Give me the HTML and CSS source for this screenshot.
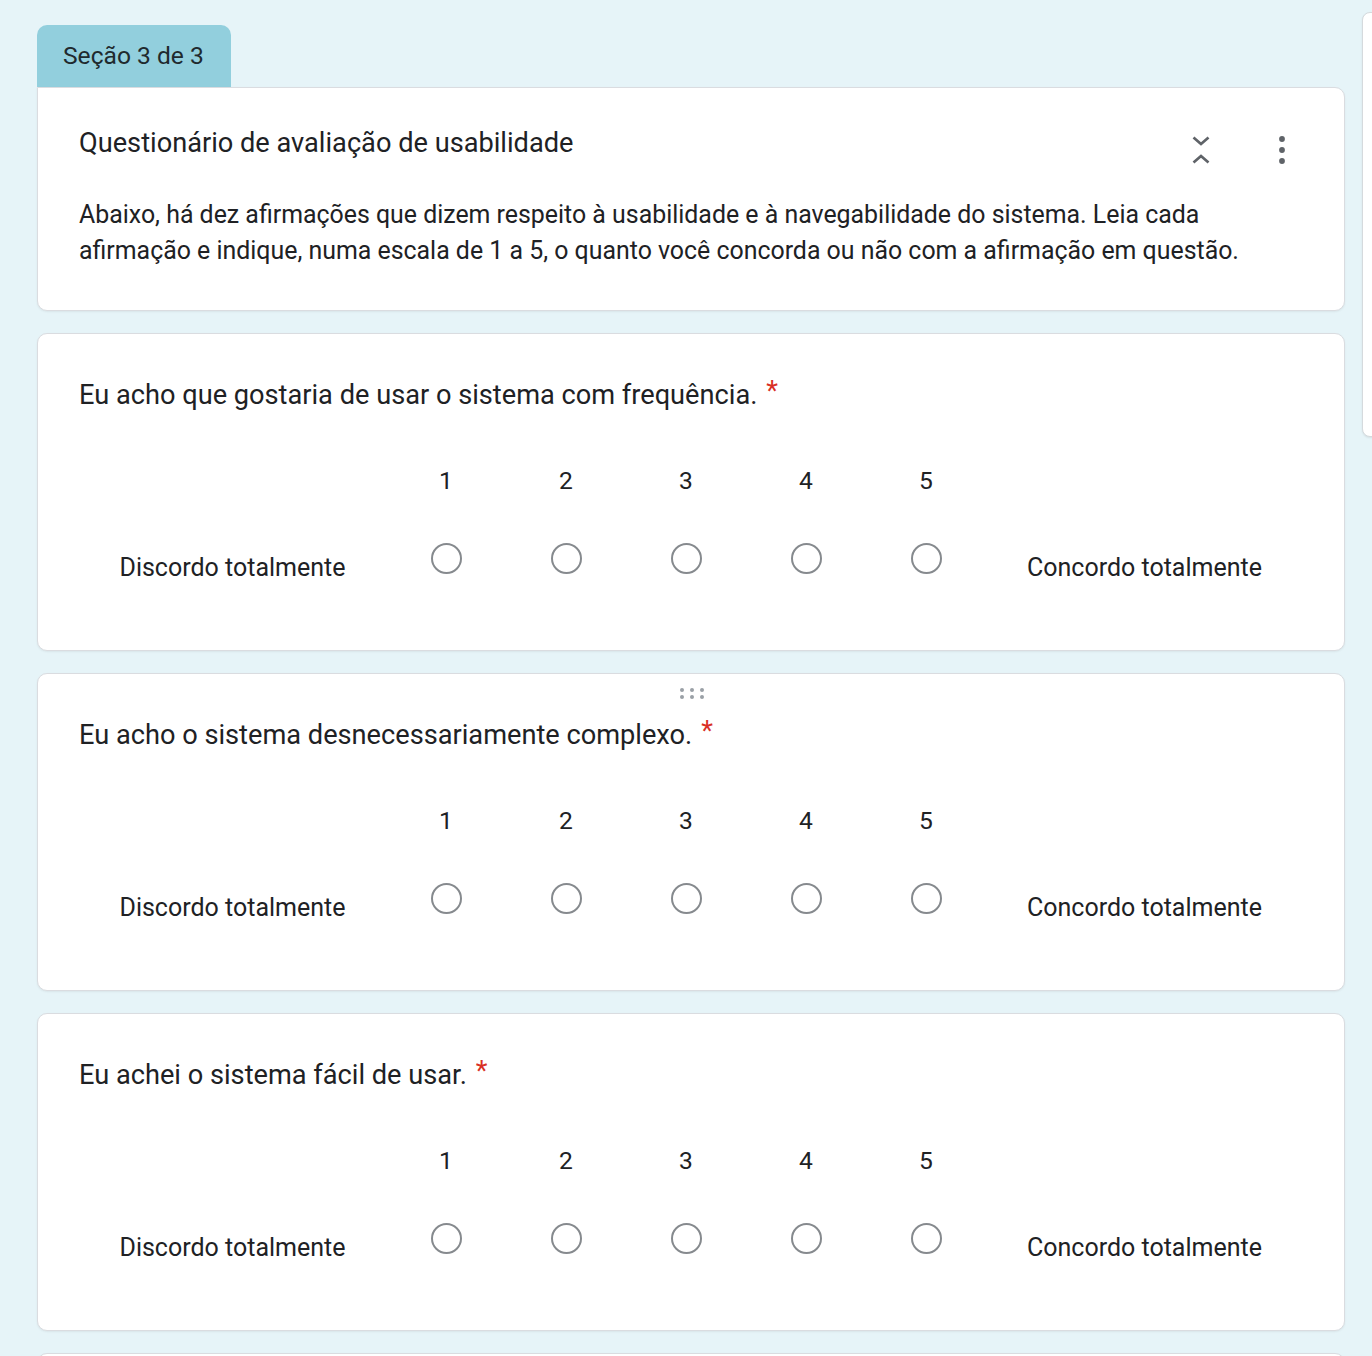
FILE: index.html
```html
<!DOCTYPE html>
<html lang="pt">
<head>
<meta charset="utf-8">
<title>Seção 3 de 3</title>
<link rel="stylesheet" href="styles.css">
</head>
<body>
<div class="side-toolbar"></div>
<main class="form">
  <div class="tab">Seção 3 de 3</div>
  <section class="card card-header">
    <div class="header-row">
      <h1 class="title">Questionário de avaliação de usabilidade</h1>
      <div class="icons">
        <svg class="icon" viewBox="0 0 30 30" width="30" height="30"><path d="M7.5 2.5 L15 9 L22.5 2.5 M7.5 27.5 L15 21 L22.5 27.5" fill="none" stroke="#5f6368" stroke-width="2.7"/></svg>
        <svg class="icon" viewBox="0 0 30 30" width="30" height="30"><circle cx="15" cy="4" r="2.9" fill="#5f6368"/><circle cx="15" cy="15" r="2.9" fill="#5f6368"/><circle cx="15" cy="26" r="2.9" fill="#5f6368"/></svg>
      </div>
    </div>
    <p class="desc">Abaixo, há dez afirmações que dizem respeito à usabilidade e à navegabilidade do sistema. Leia cada afirmação e indique, numa escala de 1 a 5, o quanto você concorda ou não com a afirmação em questão.</p>
  </section>

  <section class="card question">
    <h2 class="q-title">Eu acho que gostaria de usar o sistema com frequência.<span class="req">*</span></h2>
    <div class="scale">
      <div class="label left">Discordo totalmente</div>
      <div class="opt"><div class="num">1</div><div class="radio"><span></span></div></div>
      <div class="opt"><div class="num">2</div><div class="radio"><span></span></div></div>
      <div class="opt"><div class="num">3</div><div class="radio"><span></span></div></div>
      <div class="opt"><div class="num">4</div><div class="radio"><span></span></div></div>
      <div class="opt"><div class="num">5</div><div class="radio"><span></span></div></div>
      <div class="label right">Concordo totalmente</div>
    </div>
  </section>

  <section class="card question">
    <svg class="drag" viewBox="0 0 26 12" width="26" height="12"><g fill="#9aa0a6"><circle cx="3" cy="3" r="2"/><circle cx="13" cy="3" r="2"/><circle cx="23" cy="3" r="2"/><circle cx="3" cy="10" r="2"/><circle cx="13" cy="10" r="2"/><circle cx="23" cy="10" r="2"/></g></svg>
    <h2 class="q-title">Eu acho o sistema desnecessariamente complexo.<span class="req">*</span></h2>
    <div class="scale">
      <div class="label left">Discordo totalmente</div>
      <div class="opt"><div class="num">1</div><div class="radio"><span></span></div></div>
      <div class="opt"><div class="num">2</div><div class="radio"><span></span></div></div>
      <div class="opt"><div class="num">3</div><div class="radio"><span></span></div></div>
      <div class="opt"><div class="num">4</div><div class="radio"><span></span></div></div>
      <div class="opt"><div class="num">5</div><div class="radio"><span></span></div></div>
      <div class="label right">Concordo totalmente</div>
    </div>
  </section>

  <section class="card question">
    <h2 class="q-title">Eu achei o sistema fácil de usar.<span class="req">*</span></h2>
    <div class="scale">
      <div class="label left">Discordo totalmente</div>
      <div class="opt"><div class="num">1</div><div class="radio"><span></span></div></div>
      <div class="opt"><div class="num">2</div><div class="radio"><span></span></div></div>
      <div class="opt"><div class="num">3</div><div class="radio"><span></span></div></div>
      <div class="opt"><div class="num">4</div><div class="radio"><span></span></div></div>
      <div class="opt"><div class="num">5</div><div class="radio"><span></span></div></div>
      <div class="label right">Concordo totalmente</div>
    </div>
  </section>

  <section class="card question"></section>
</main>
</body>
</html>
```

FILE: styles.css
```css
html, body {
  margin: 0;
  padding: 0;
  overflow: hidden;
}
body {
  width: 1372px;
  height: 1356px;
  background: #e6f4f8;
  font-family: Roboto, "Noto Sans", Arial, sans-serif;
  color: #202124;
  position: relative;
}
.side-toolbar {
  position: absolute;
  left: 1362px;
  top: 12px;
  width: 40px;
  height: 423px;
  background: #fff;
  border: 1px solid #d5dadd;
  border-radius: 8px;
  box-shadow: 0 1px 2px rgba(0,0,0,0.08);
}
.form {
  width: 1308px;
  padding: 25px 0 0 37px;
  display: flex;
  flex-direction: column;
}
.tab {
  align-self: flex-start;
  width: 168px;
  height: 62px;
  padding-left: 26px;
  background: #92cfdd;
  border-radius: 10px 10px 0 0;
  font-size: 24.6px;
  line-height: 62px;
  color: #1f2a2e;
}
.card {
  background: #fff;
  border: 1px solid #dadce0;
  border-radius: 10px;
  box-shadow: 0 1px 2px rgba(60,64,67,0.08);
  box-sizing: border-box;
  position: relative;
}
.card-header {
  border-top-left-radius: 0;
  height: 224px;
  padding: 39px 41px 0 41px;
}
.header-row {
  display: flex;
  align-items: flex-start;
}
.title {
  flex: 1;
  margin: 0;
  font-size: 27.2px;
  font-weight: 400;
  line-height: 32px;
}
.icons {
  display: flex;
  gap: 51px;
  margin-top: 8px;
  margin-right: 6px;
}
.icon { display: block; }
.desc {
  margin: 32px 0 0 0;
  font-size: 24.9px;
  line-height: 36px;
}
.question {
  margin-top: 22px;
  height: 318px;
  padding: 45px 41px 0 41px;
}
.drag {
  position: absolute;
  left: 641px;
  top: 13px;
}
.q-title {
  margin: 0;
  font-size: 27.2px;
  font-weight: 400;
  line-height: 32px;
}
.req {
  color: #d93025;
  padding-left: 9px;
  position: relative;
  top: -4px;
}
.scale {
  margin-top: 55px;
  display: flex;
  align-items: flex-end;
}
.label {
  font-size: 25px;
  line-height: 30px;
  text-align: center;
  position: relative;
  top: 1px;
}
.label.left { width: 307px; }
.label.right { flex: 1; }
.opt {
  width: 120px;
  display: flex;
  flex-direction: column;
  align-items: center;
  gap: 38px;
}
.num {
  font-size: 24.6px;
  line-height: 30px;
}
.radio {
  height: 48px;
  display: flex;
  align-items: center;
  justify-content: center;
}
.radio span {
  width: 27px;
  height: 27px;
  border: 2.5px solid #868a8e;
  border-radius: 50%;
}
```
